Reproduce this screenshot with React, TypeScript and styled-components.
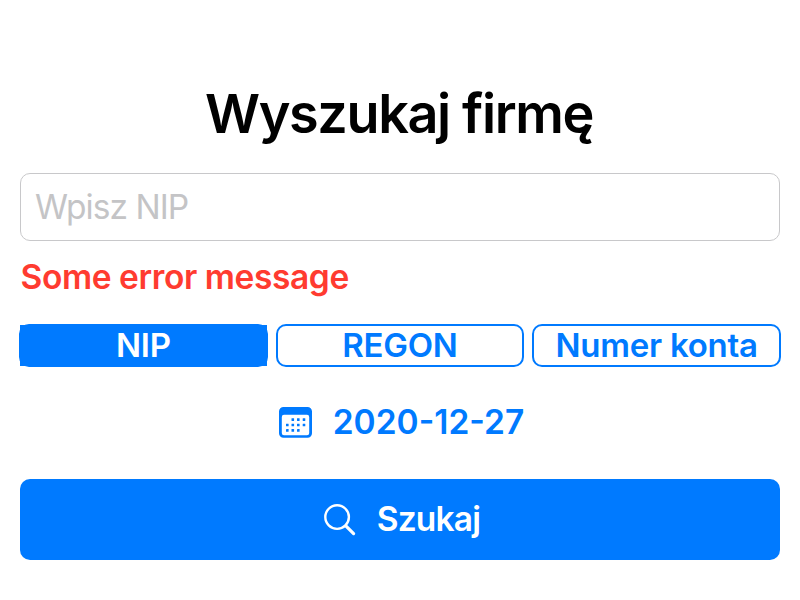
import React from 'react';
import styled, { createGlobalStyle, css } from 'styled-components';

const Global = createGlobalStyle`
  *{box-sizing:border-box}
  body{margin:0;background:#fff;font-family:Inter,"Liberation Sans",sans-serif;overflow:hidden}
  button,input{font-family:inherit;margin:0}
`;
const Screen = styled.main`
  width:800px;height:600px;padding:80px 20px 0;display:flex;flex-direction:column;
`;
const Title = styled.h1`
  margin:0;height:93px;line-height:68px;font-size:54px;font-weight:600;letter-spacing:-1.4px;text-indent:-2px;text-align:center;color:#000;
`;
const Field = styled.input`
  flex:none;width:100%;height:68px;border:1px solid #c8c8ca;border-radius:10px;padding:0 14px;font-size:33.5px;letter-spacing:-0.95px;outline:0;background:#fff;
  &::placeholder{color:#c4c4c6;opacity:1}
`;
const ErrorText = styled.p`
  margin:15px 0 0;height:68px;padding-left:.5px;line-height:42px;font-size:33.5px;font-weight:600;letter-spacing:-0.4px;color:#ff3b30;white-space:nowrap;
`;
const Tabs = styled.div`
  display:grid;grid-template-columns:repeat(3,1fr);gap:8px;margin:0 -1px;height:43px;
`;
const Tab = styled.button<{ $active?: boolean }>`
  position:relative;isolation:isolate;padding:0;border:2px solid #007aff;border-radius:10px;background:#fff;color:#007aff;
  font-size:33px;line-height:39px;font-weight:600;letter-spacing:-0.25px;white-space:nowrap;
  ${p => p.$active && css`
    background:#007aff;color:#fff;
    &::before{content:"";position:absolute;z-index:-1;inset:-1px;background:#007aff}
  `}
`;
const DateButton = styled.button`
  border:0;background:none;padding:0 0 3px 3px;margin-top:34px;height:44px;display:flex;align-items:center;justify-content:center;gap:21px;color:#007aff;font-size:33.5px;font-weight:600;letter-spacing:0;
`;
const Search = styled.button`
  border:0;border-radius:10px;background:#007aff;color:#fff;height:81px;margin-top:34px;padding:0 0 1px 4px;display:flex;align-items:center;justify-content:center;gap:20px;font-size:33.5px;font-weight:600;letter-spacing:-0.8px;
`;
const Icon = styled.svg<{ $drop?: number }>`
  flex:none;display:block;overflow:visible;margin-top:${p => p.$drop ?? 0}px;
`;

const DOTS = [[13.8, 12.6], [19.3, 12.6], [25, 12.6], [8.3, 18], [13.8, 18], [19.3, 18], [25, 18], [8.3, 23.4], [13.8, 23.4], [19.3, 23.4]];

const CalendarIcon = () => (
  <Icon $drop={1} width="33" height="31" viewBox="0 0 33 31" fill="currentColor">
    <path fillRule="evenodd" d="M4.5 0h24A4.5 4.5 0 0 1 33 4.5v21.7a4.5 4.5 0 0 1-4.5 4.5h-24A4.5 4.5 0 0 1 0 26.2V4.5A4.5 4.5 0 0 1 4.5 0ZM5 7.8a2.2 2.2 0 0 0-2.2 2.2v16A2.2 2.2 0 0 0 5 28.2h23a2.2 2.2 0 0 0 2.2-2.2V10A2.2 2.2 0 0 0 28 7.8Z" />
    {DOTS.map(([x, y]) => <rect key={`${x}-${y}`} x={x - 1.3} y={y - 1.3} width="2.6" height="2.6" rx=".3" />)}
  </Icon>
);
const SearchIcon = () => (
  <Icon $drop={3} width="33" height="33" viewBox="0 0 33 33" fill="none" stroke="currentColor" strokeLinecap="round">
    <circle cx="13.1" cy="13.1" r="11.8" strokeWidth="2.4" />
    <path d="m21.8 21.8 7.8 7.8" strokeWidth="3.2" />
  </Icon>
);

export default function App() {
  return (
    <>
      <Global />
      <Screen>
        <Title>Wyszukaj firmę</Title>
        <Field placeholder="Wpisz NIP" />
        <ErrorText>Some error message</ErrorText>
        <Tabs>
          <Tab $active>NIP</Tab>
          <Tab>REGON</Tab>
          <Tab>Numer konta</Tab>
        </Tabs>
        <DateButton><CalendarIcon />2020-12-27</DateButton>
        <Search><SearchIcon />Szukaj</Search>
      </Screen>
    </>
  );
}
